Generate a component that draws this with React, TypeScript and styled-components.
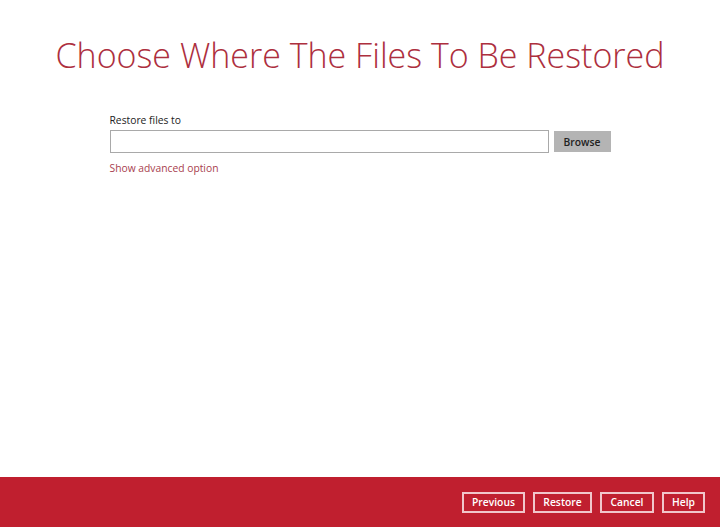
import React from 'react'
import styled, { createGlobalStyle } from 'styled-components'

const GlobalStyle = createGlobalStyle`
  html, body {
    margin: 0;
    padding: 0;
    height: 100%;
    background: #ffffff;
    font-family: 'Open Sans', 'Liberation Sans', sans-serif;
  }
  #root {
    height: 100%;
  }
`

const Page = styled.div`
  display: flex;
  flex-direction: column;
  width: 720px;
  height: 527px;
  overflow: hidden;
`

const Content = styled.main`
  flex: 1;
  display: flex;
  flex-direction: column;
  align-items: center;
`

const Title = styled.h1`
  margin: 34px 0 0;
  font-size: 34px;
  font-weight: 300;
  line-height: 42px;
  color: #ad2f3e;
`

const Form = styled.section`
  width: 501px;
  margin-top: 37px;
`

const Label = styled.div`
  font-size: 10.3px;
  line-height: 15px;
  color: #222;
`

const PathRow = styled.div`
  display: flex;
  align-items: center;
  gap: 5px;
  margin-top: 2px;
`

const PathInput = styled.input`
  box-sizing: border-box;
  width: 439px;
  height: 23px;
  border: 1px solid #a9a9a9;
  outline: none;
  padding: 0 4px;
  font-family: inherit;
  font-size: 10.3px;
`

const GreyButton = styled.button`
  box-sizing: border-box;
  width: 57px;
  height: 21px;
  border: none;
  background: #b4b4b4;
  color: #222;
  font-family: inherit;
  font-size: 10.3px;
  font-weight: 600;
  padding: 0;
`

const AdvancedLink = styled.a`
  display: inline-block;
  margin-top: 8px;
  font-size: 10.3px;
  line-height: 15px;
  color: #a8404e;
  cursor: pointer;
`

const Footer = styled.footer`
  height: 50px;
  background: #c01f2f;
  display: flex;
  align-items: center;
  justify-content: flex-end;
  gap: 8px;
  padding-right: 15px;
`

const FooterButton = styled.button<{ $w: number }>`
  box-sizing: border-box;
  width: ${p => p.$w}px;
  height: 21px;
  border: 2px solid #f1c6cb;
  background: transparent;
  color: #ffffff;
  font-family: inherit;
  font-size: 10.3px;
  font-weight: 600;
  padding: 0;
`

export default function App() {
  return (
    <Page>
      <GlobalStyle />
      <Content>
        <Title>Choose Where The Files To Be Restored</Title>
        <Form>
          <Label>Restore files to</Label>
          <PathRow>
            <PathInput type="text" />
            <GreyButton>Browse</GreyButton>
          </PathRow>
          <AdvancedLink>Show advanced option</AdvancedLink>
        </Form>
      </Content>
      <Footer>
        <FooterButton $w={63}>Previous</FooterButton>
        <FooterButton $w={59}>Restore</FooterButton>
        <FooterButton $w={54}>Cancel</FooterButton>
        <FooterButton $w={43}>Help</FooterButton>
      </Footer>
    </Page>
  )
}
